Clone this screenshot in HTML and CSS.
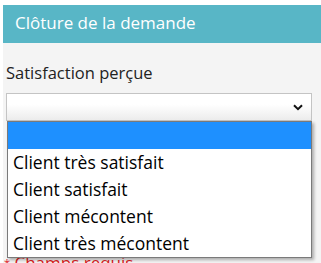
FILE: index.html
```html
<!DOCTYPE html>
<html lang="fr">
<head>
    <meta charset="UTF-8">
    <title>Clôture de la demande</title>
    <link rel="stylesheet" href="styles.css">
</head>
<body>
    <div class="panel">
        <div class="panel-heading">Clôture de la demande</div>
        <div class="panel-body">
            <label class="field-label">Satisfaction perçue</label>
            <div class="select-box">
                <svg class="chevron" width="10" height="7" viewBox="0 0 10 7">
                    <path d="M1 1.2 L5 5.2 L9 1.2" fill="none" stroke="#111" stroke-width="2"/>
                </svg>
            </div>
            <div class="required"><span class="star">*</span> Champs requis</div>
        </div>
    </div>

    <!-- open dropdown list -->
    <ul class="dropdown">
        <li class="selected">&nbsp;</li>
        <li>Client très satisfait</li>
        <li>Client satisfait</li>
        <li>Client mécontent</li>
        <li>Client très mécontent</li>
    </ul>
</body>
</html>
```

FILE: styles.css
```css
/* General Styles */
* {
    margin: 0;
    padding: 0;
    box-sizing: border-box;
}

body {
    font-family: "Open Sans", Arial, sans-serif;
    background-color: #fff;
    position: relative;
    height: 263px;
    overflow: hidden;
}

/* Panel */
.panel {
    margin: 5px 0 0 3px;
    background-color: #f4f4f4;
}

.panel-heading {
    background-color: #58b6c6;
    color: #fff;
    font-size: 17px;
    height: 38px;
    line-height: 36px;
    padding-left: 12px;
}

.panel-body {
    padding: 18px 10px 20px 3px;
}

.field-label {
    display: block;
    font-size: 16.5px;
    color: #222;
    line-height: 24px;
    margin-bottom: 8px;
}

.select-box {
    position: relative;
    height: 28px;
    width: 306px;
    border: 1px solid #c4c4c4;
    background: linear-gradient(#fff 40%, #ececec);
}

.chevron {
    position: absolute;
    right: 8px;
    top: 10px;
}

.required {
    margin-top: 131px;
    color: #e0201c;
    font-size: 17px;
    line-height: 22px;
    margin-left: -2px;
}

.star {
    font-size: 11px;
    vertical-align: top;
}

/* Dropdown list */
.dropdown {
    position: absolute;
    left: 7px;
    top: 121px;
    width: 305px;
    list-style: none;
    background-color: #fff;
    border: 1px solid #7a7a7a;
    box-shadow: 2px 2px 3px rgba(0, 0, 0, 0.3);
}

.dropdown li {
    height: 27px;
    line-height: 27px;
    padding-left: 5px;
    font-size: 17.5px;
    color: #000;
}

.dropdown .selected {
    background-color: #1e90ff;
}
```
